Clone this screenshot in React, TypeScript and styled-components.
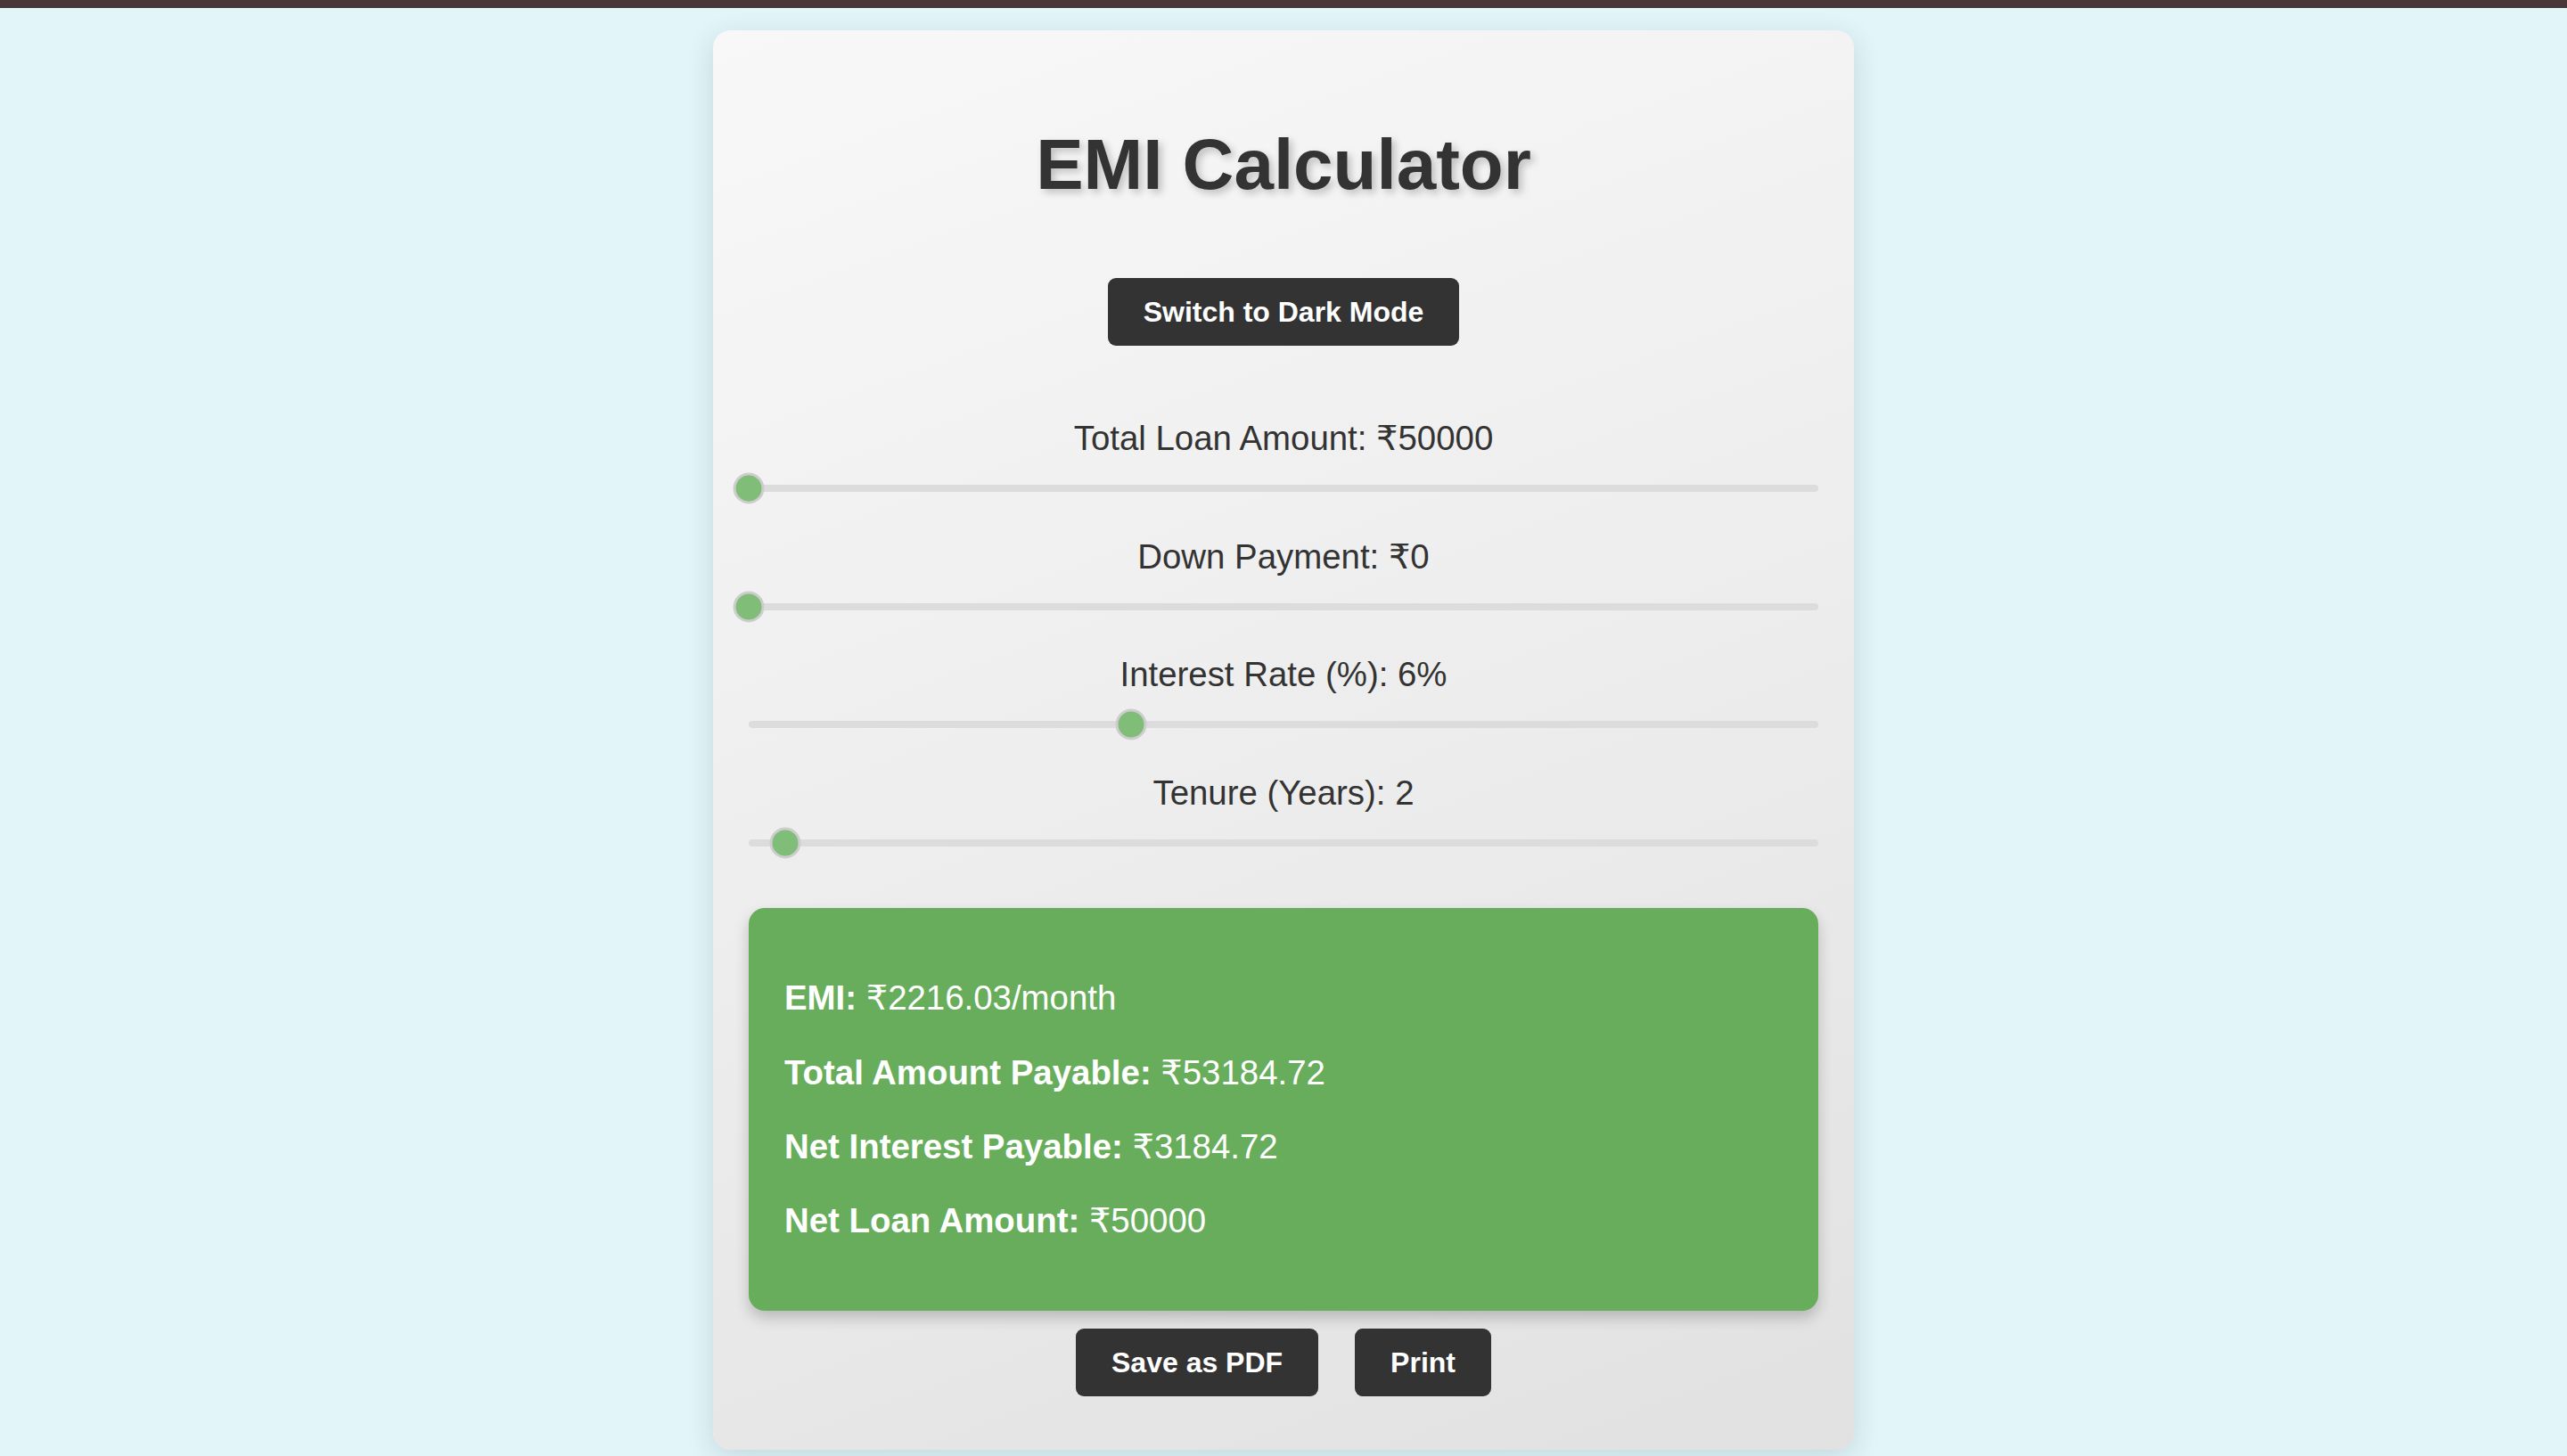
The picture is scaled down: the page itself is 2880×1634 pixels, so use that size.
import React, { useState } from "react";
import styled, { createGlobalStyle } from "styled-components";

const GlobalStyle = createGlobalStyle`
  html, body {
    margin: 0;
    padding: 0;
    background: #e2f5f9;
    font-family: "Liberation Sans", Arial, "DejaVu Sans", sans-serif;
    color: #333;
  }
  * { box-sizing: border-box; }
`;

const Page = styled.div`
  min-height: 1634px;
  display: flex;
  flex-direction: column;
  align-items: center;
`;

const TopBar = styled.div`
  align-self: stretch;
  height: 9px;
  background: #4a3539;
`;

const Card = styled.main`
  width: 1280px;
  margin-top: 25px;
  padding: 40px 40px 40px;
  border-radius: 20px;
  background: linear-gradient(160deg, #f8f8f8 0%, #ececec 55%, #e1e1e1 100%);
  box-shadow: 0 8px 30px rgba(40, 70, 80, 0.16);
  display: flex;
  flex-direction: column;
  align-items: center;
`;

const Title = styled.h1`
  margin: 65px 0 0;
  font-size: 80px;
  line-height: 92px;
  font-weight: 700;
  color: #333;
  text-shadow: 4px 4px 8px rgba(0, 0, 0, 0.22);
`;

const DarkButton = styled.button<{ $mt?: number }>`
  font-family: "Liberation Sans", Arial, sans-serif;
  font-size: 32px;
  line-height: 36px;
  font-weight: 700;
  color: #fff;
  background: #333;
  border: none;
  border-radius: 9px;
  padding: 20px 40px;
  margin-top: ${(p) => p.$mt ?? 0}px;
  cursor: pointer;
`;

const Sliders = styled.section`
  align-self: stretch;
  margin-top: 82px;
  display: flex;
  flex-direction: column;
  gap: 36.5px;
`;

const Group = styled.div`
  display: flex;
  flex-direction: column;
  gap: 16px;
`;

const Label = styled.label`
  text-align: center;
  font-size: 38.4px;
  line-height: 44px;
  color: #333;
`;

const SliderRow = styled.div`
  position: relative;
  height: 36px;
  display: flex;
  align-items: center;
`;

const Track = styled.div`
  width: 100%;
  height: 8px;
  border-radius: 4px;
  background: #dcdcdc;
`;

const Thumb = styled.div`
  position: absolute;
  top: 50%;
  width: 35px;
  height: 35px;
  border-radius: 50%;
  background: #80bd79;
  border: 3.5px solid #cdcdcd;
  transform: translate(-50%, -50%);
`;

const Results = styled.section`
  align-self: stretch;
  margin-top: 55.5px;
  padding: 40px;
  border-radius: 18px;
  background: #68ad5c;
  color: #fff;
  box-shadow: 0 8px 16px rgba(0, 0, 0, 0.2);
`;

const ResultLine = styled.p`
  margin: 39.3px 0;
  font-size: 38.4px;
  line-height: 44px;
  strong { font-weight: 700; }
`;

const Actions = styled.div`
  display: flex;
  justify-content: center;
  gap: 41px;
  margin-top: 20px;
  margin-bottom: 20px;
`;

type SliderProps = { label: string; value: number; min: number; max: number };

function Slider({ label, value, min, max }: SliderProps) {
  const pct = ((value - min) / (max - min)) * 100;
  return (
    <Group>
      <Label>{label}</Label>
      <SliderRow>
        <Track />
        <Thumb style={{ left: `${pct}%` }} />
      </SliderRow>
    </Group>
  );
}

export default function App() {
  const [loan] = useState(50000);
  const [down] = useState(0);
  const [rate] = useState(6);
  const [years] = useState(2);

  const principal = loan - down;
  const r = rate / 12 / 100;
  const n = years * 12;
  const f = Math.pow(1 + r, n);
  const emi = (principal * r * f) / (f - 1);
  const emiR = Math.round(emi * 100) / 100;
  const totalR = Math.round(emiR * n * 100) / 100;
  const interestR = Math.round((totalR - principal) * 100) / 100;

  return (
    <>
      <GlobalStyle />
      <Page>
        <TopBar />
        <Card>
          <Title>EMI Calculator</Title>
          <DarkButton $mt={81}>Switch to Dark Mode</DarkButton>
          <Sliders>
            <Slider label={`Total Loan Amount: ₹${loan}`} value={loan} min={50000} max={10000000} />
            <Slider label={`Down Payment: ₹${down}`} value={down} min={0} max={5000000} />
            <Slider label={`Interest Rate (%): ${rate}%`} value={rate} min={1} max={15} />
            <Slider label={`Tenure (Years): ${years}`} value={years} min={1} max={30} />
          </Sliders>
          <Results>
            <ResultLine>
              <strong>EMI:</strong> ₹{emiR.toFixed(2)}/month
            </ResultLine>
            <ResultLine>
              <strong>Total Amount Payable:</strong> ₹{totalR.toFixed(2)}
            </ResultLine>
            <ResultLine>
              <strong>Net Interest Payable:</strong> ₹{interestR.toFixed(2)}
            </ResultLine>
            <ResultLine>
              <strong>Net Loan Amount:</strong> ₹{principal}
            </ResultLine>
          </Results>
          <Actions>
            <DarkButton>Save as PDF</DarkButton>
            <DarkButton>Print</DarkButton>
          </Actions>
        </Card>
      </Page>
    </>
  );
}
